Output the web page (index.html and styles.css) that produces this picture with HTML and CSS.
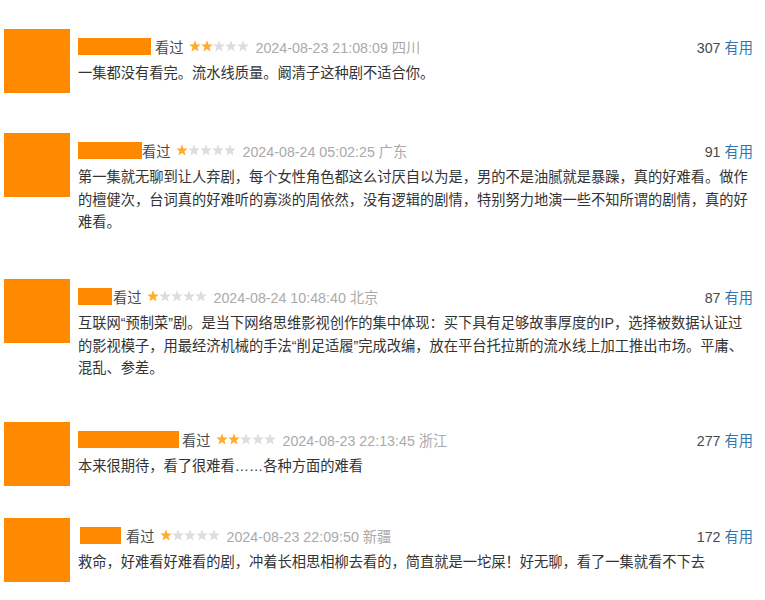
FILE: index.html
```html
<!DOCTYPE html>
<html>
<head>
    <meta charset="utf-8">
    <title>短评</title>
    <link rel="stylesheet" href="styles.css">
</head>
<body>
    <svg class="defs" width="0" height="0">
        <symbol id="star" viewBox="0 0 12 12">
            <polygon points="6,0.3 7.53,4.4 11.8,4.6 8.47,7.3 9.6,11.5 6,9.1 2.4,11.5 3.53,7.3 0.2,4.6 4.47,4.4"/>
        </symbol>
    </svg>

    <div class="comments">
        <div class="comment">
            <div class="avatar"></div>
            <div class="comment-body">
                <div class="meta">
                    <span class="name" style="width:73px;margin-right:4px"></span>
                    <span class="status">看过</span>
                    <span class="stars">
                        <svg class="on"><use href="#star"/></svg><svg class="on"><use href="#star"/></svg><svg><use href="#star"/></svg><svg><use href="#star"/></svg><svg><use href="#star"/></svg>
                    </span>
                    <span class="time">2024-08-23 21:08:09 四川</span>
                    <span class="votes"><span class="count">307</span> <a class="useful">有用</a></span>
                </div>
                <p class="short">一集都没有看完。流水线质量。阚清子这种剧不适合你。</p>
            </div>
        </div>

        <div class="comment">
            <div class="avatar"></div>
            <div class="comment-body">
                <div class="meta">
                    <span class="name" style="width:64px;margin-right:0"></span>
                    <span class="status">看过</span>
                    <span class="stars">
                        <svg class="on"><use href="#star"/></svg><svg><use href="#star"/></svg><svg><use href="#star"/></svg><svg><use href="#star"/></svg><svg><use href="#star"/></svg>
                    </span>
                    <span class="time">2024-08-24 05:02:25 广东</span>
                    <span class="votes"><span class="count">91</span> <a class="useful">有用</a></span>
                </div>
                <p class="short">第一集就无聊到让人弃剧，每个女性角色都这么讨厌自以为是，男的不是油腻就是暴躁，真的好难看。做作的檀健次，台词真的好难听的寡淡的周依然，没有逻辑的剧情，特别努力地演一些不知所谓的剧情，真的好难看。</p>
            </div>
        </div>

        <div class="comment">
            <div class="avatar"></div>
            <div class="comment-body">
                <div class="meta">
                    <span class="name" style="width:34px;margin-right:1px"></span>
                    <span class="status">看过</span>
                    <span class="stars">
                        <svg class="on"><use href="#star"/></svg><svg><use href="#star"/></svg><svg><use href="#star"/></svg><svg><use href="#star"/></svg><svg><use href="#star"/></svg>
                    </span>
                    <span class="time">2024-08-24 10:48:40 北京</span>
                    <span class="votes"><span class="count">87</span> <a class="useful">有用</a></span>
                </div>
                <p class="short">互联网“预制菜”剧。是当下网络思维影视创作的集中体现：买下具有足够故事厚度的IP，选择被数据认证过的影视模子，用最经济机械的手法“削足适履”完成改编，放在平台托拉斯的流水线上加工推出市场。平庸、混乱、参差。</p>
            </div>
        </div>

        <div class="comment">
            <div class="avatar"></div>
            <div class="comment-body">
                <div class="meta">
                    <span class="name" style="width:101px;margin-right:3px"></span>
                    <span class="status">看过</span>
                    <span class="stars">
                        <svg class="on"><use href="#star"/></svg><svg class="on"><use href="#star"/></svg><svg><use href="#star"/></svg><svg><use href="#star"/></svg><svg><use href="#star"/></svg>
                    </span>
                    <span class="time">2024-08-23 22:13:45 浙江</span>
                    <span class="votes"><span class="count">277</span> <a class="useful">有用</a></span>
                </div>
                <p class="short">本来很期待，看了很难看……各种方面的难看</p>
            </div>
        </div>

        <div class="comment">
            <div class="avatar"></div>
            <div class="comment-body">
                <div class="meta">
                    <span class="name" style="width:41px;margin-right:5px;margin-left:2px"></span>
                    <span class="status">看过</span>
                    <span class="stars">
                        <svg class="on"><use href="#star"/></svg><svg><use href="#star"/></svg><svg><use href="#star"/></svg><svg><use href="#star"/></svg><svg><use href="#star"/></svg>
                    </span>
                    <span class="time">2024-08-23 22:09:50 新疆</span>
                    <span class="votes"><span class="count">172</span> <a class="useful">有用</a></span>
                </div>
                <p class="short">救命，好难看好难看的剧，冲着长相思相柳去看的，简直就是一坨屎！好无聊，看了一集就看不下去</p>
            </div>
        </div>
    </div>
</body>
</html>
```

FILE: styles.css
```css
body { margin: 0; background: #fff; font-family: "Liberation Sans", "Noto Sans CJK SC", sans-serif; font-size: 14.25px; color: #333; }
.defs { position: absolute; }
.comments { padding: 29px 12px 0 4px; }
.comment { display: flex; gap: 8px; margin-bottom: 40px; }
.comment:nth-child(2) { margin-bottom: 45.5px; }
.comment:nth-child(3) { margin-bottom: 42.5px; }
.comment:nth-child(4) { margin-bottom: 32px; }
.avatar { width: 66px; height: 64px; background: #ff8a00; flex-shrink: 0; }
.comment-body { flex: 1; padding-top: 7px; }
.meta { display: flex; align-items: center; height: 20px; }
.name { display: inline-block; height: 17px; background: #ff8a00; }
.status { color: #494949; margin-right: 5px; }
.stars { display: inline-flex; margin-right: 7px; }
.stars svg { width: 12px; height: 12px; fill: #ddd; }
.stars svg.on { fill: #ffac2d; }
.time { color: #aaa; }
.votes { margin-left: auto; }
.count { color: #494949; }
.useful { color: #37a; cursor: pointer; }
.short { margin: 6px 0 0; line-height: 22.5px; color: #333; }
```
